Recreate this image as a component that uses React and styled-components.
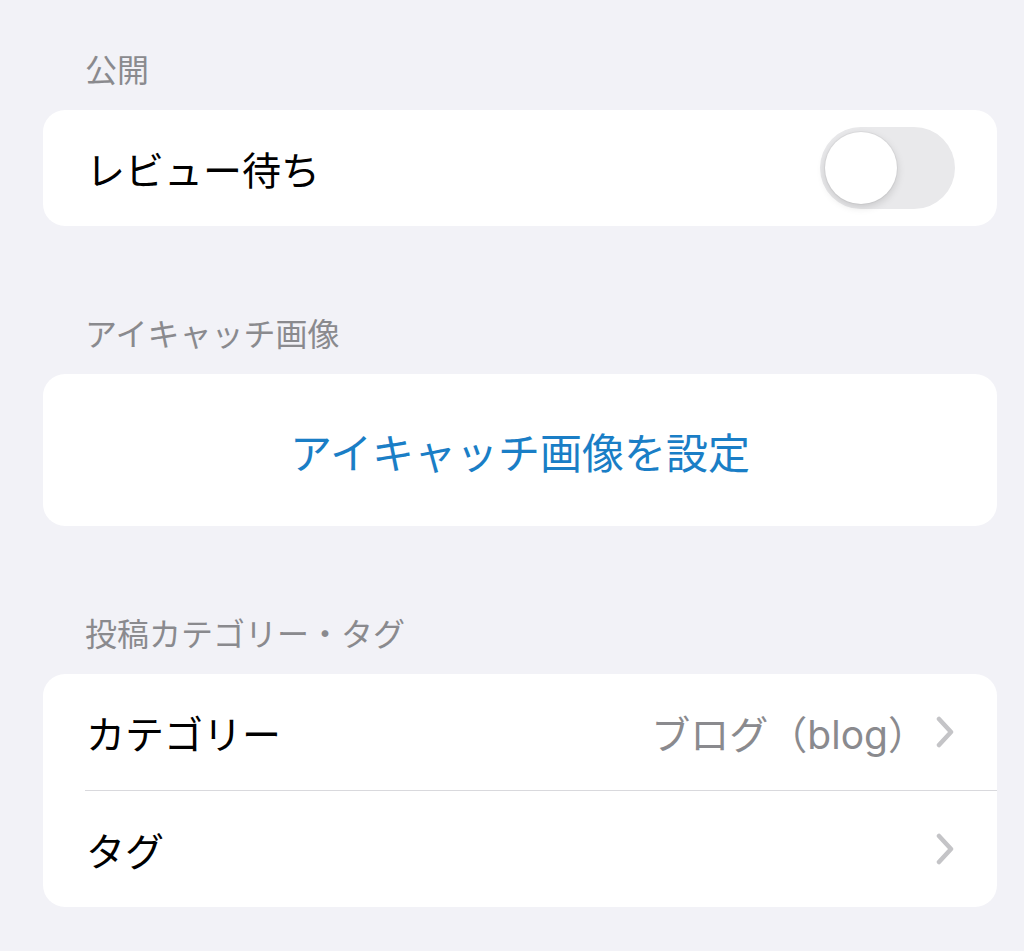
import React from "react";
import styled, { createGlobalStyle } from "styled-components";

const Global = createGlobalStyle`
  html, body {
    margin: 0;
    background: #f2f2f7;
  }
  body {
    font-family: "Inter", "Noto Sans CJK JP", sans-serif;
    -webkit-font-smoothing: antialiased;
  }
`;

const Page = styled.div`
  padding: 51px 27px 40px 43px;
  display: flex;
  flex-direction: column;
`;

const Section = styled.section`
  & + & {
    margin-top: 89px;
  }
`;

const Header = styled.div`
  height: 40px;
  line-height: 40px;
  padding-left: 42px;
  margin-bottom: 19px;
  font-size: 32px;
  color: #8a8a8e;
`;

const Card = styled.div`
  background: #ffffff;
  border-radius: 22px;
  overflow: hidden;
`;

const Row = styled.div`
  display: flex;
  align-items: center;
  justify-content: space-between;
  height: ${(p) => p.$height || 116}px;
  padding: 0 ${(p) => p.$right || 42}px 0 43px;
  box-sizing: border-box;
`;

const Separator = styled.div`
  height: 1px;
  margin-left: 42px;
  background: #d9d9dd;
`;

const Label = styled.span`
  font-size: 39px;
  color: #000000;
`;

const Trailing = styled.div`
  display: flex;
  align-items: center;
  gap: 8px;
`;

const Value = styled.span`
  font-size: 39px;
  color: #8a8a8e;
`;

const ActionButton = styled.button`
  all: unset;
  display: flex;
  align-items: center;
  justify-content: center;
  width: 100%;
  height: 152px;
  font-family: inherit;
  font-size: 42px;
  color: #1a7ec6;
  cursor: pointer;
`;

const Switch = styled.div`
  width: 135px;
  height: 82px;
  border-radius: 41px;
  background: #e9e9eb;
  padding: 5px;
  box-sizing: border-box;
  display: flex;
  justify-content: ${(p) => (p.$on ? "flex-end" : "flex-start")};
`;

const Knob = styled.div`
  width: 72px;
  height: 72px;
  border-radius: 50%;
  background: #ffffff;
  box-shadow: 0 3px 8px rgba(0, 0, 0, 0.15), 0 0 0 1px rgba(0, 0, 0, 0.04);
`;

const Chevron = () => (
  <svg width="20" height="32" viewBox="0 0 20 32" fill="none">
    <path
      d="M4 3 L16 16 L4 29"
      stroke="#c4c4c7"
      strokeWidth="4.5"
      strokeLinecap="round"
      strokeLinejoin="round"
    />
  </svg>
);

export default function App() {
  return (
    <>
      <Global />
      <Page>
        <Section>
          <Header>公開</Header>
          <Card>
            <Row>
              <Label>レビュー待ち</Label>
              <Switch $on={false}>
                <Knob />
              </Switch>
            </Row>
          </Card>
        </Section>

        <Section>
          <Header>アイキャッチ画像</Header>
          <Card>
            <ActionButton>アイキャッチ画像を設定</ActionButton>
          </Card>
        </Section>

        <Section>
          <Header>投稿カテゴリー・タグ</Header>
          <Card>
            <Row $right={42}>
              <Label>カテゴリー</Label>
              <Trailing>
                <Value>ブログ（blog）</Value>
                <Chevron />
              </Trailing>
            </Row>
            <Separator />
            <Row $right={42}>
              <Label>タグ</Label>
              <Chevron />
            </Row>
          </Card>
        </Section>
      </Page>
    </>
  );
}
